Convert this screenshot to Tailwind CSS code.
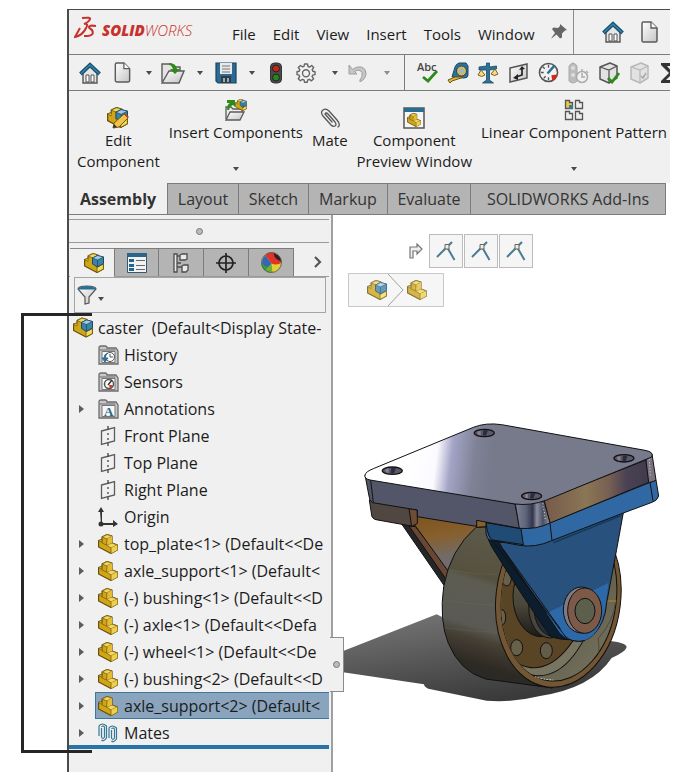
<!DOCTYPE html>
<html lang="en">
<head>
    <meta charset="UTF-8">
    <meta name="viewport" content="width=device-width, initial-scale=1.0">
    <title>SOLIDWORKS - caster</title>
    <script src="https://cdn.jsdelivr.net/npm/@tailwindcss/browser@4"></script>
</head>
<body class="bg-white text-[#1c1c1c] text-[15px] font-['Open_Sans','Noto_Sans',sans-serif]">

    <!-- Icon sprites -->
    <svg class="absolute h-0 w-0" aria-hidden="true">
        <symbol id="home" viewBox="0 0 22 22">
            <path d="M4 10v11h14V10l-7-6z" fill="#e6e6e6" stroke="#555" stroke-width="1.4"/>
            <path d="M7 20v-7h3v7zM12 20v-7h3v7z" fill="#fff" stroke="#555"/>
            <path d="M1.500 12 11 3l9.500 9" fill="none" stroke="#174f6e" stroke-width="4"/>
            <path d="M2 11.500 11 3l9 8.500" fill="none" stroke="#3585ab" stroke-width="1.600"/>
        </symbol>
        <symbol id="doc" viewBox="0 0 18 22">
            <path d="M2 2.500Q2 1 3.500 1H11l6 6v12.500q0 1.500-1.500 1.500h-12Q2 21 2 19.500z" fill="url(#paper)" stroke="#5b5b5b" stroke-width="1.500"/>
            <path d="M11 1v6h6" fill="#fff" stroke="#5b5b5b" stroke-width="1.300"/>
        </symbol>
        <symbol id="down" viewBox="0 0 6 4"><path d="M0 0h6L3 4z" fill="#4a4a4a"/></symbol>
        <symbol id="part" viewBox="0 0 20 20">
            <path d="m.6 6.500 3.400-1V3l5-2.400L14 2v7l5.400 2v5l-6.400 3.500L.6 13z" fill="#d0a516" stroke="#67500c" stroke-width="1.200" stroke-linejoin="round"/>
            <path d="m4 3 5 2 5-3-5-1.400zM8.500 11l4.500 3 6.400-3L14 9zM.6 6.500 4 8.500V5.500z" fill="#f0d662" stroke="#7d6110" stroke-width=".8" stroke-linejoin="round"/>
            <path d="m9 5 5-3v7l-5.500 2z" fill="#e3bd35"/>
            <path d="m13 14 6.400-3v5L13 19.500z" fill="#ecd04e"/>
            <path d="M13 14v5.500M9 5l-.5 6M4 5v4l4.500 2" fill="none" stroke="#7d6110" stroke-width=".8"/>
        </symbol>
        <symbol id="asm" viewBox="0 0 20 20">
            <path d="m.6 6.500 3.400-1V3l5-2.400L14 2v7l5.400 2v5l-6.400 3.500L.6 13z" fill="#d0a516" stroke="#67500c" stroke-width="1.200" stroke-linejoin="round"/>
            <path d="m4 3 5 2 5-3-5-1.400zM.6 6.500 4 8.500V5.500z" fill="#f0d662" stroke="#7d6110" stroke-width=".8" stroke-linejoin="round"/>
            <path d="M13 14v5.500l6.400-3.500v-5z" fill="#f6dc55" stroke="#67500c" stroke-width=".8"/>
            <path d="m8.500 5 5-2.500 6 1.500v6.500L13.500 14l-5-3z" fill="#3d83a8" stroke="#1f4a63" stroke-linejoin="round"/>
            <path d="m8.500 5 5 2 6-3-6-1.500z" fill="#9dcbe2" stroke="#1f4a63" stroke-width=".7"/>
            <path d="M13.500 7v7" stroke="#1f4a63" stroke-width=".8"/>
        </symbol>
        <symbol id="cube" viewBox="0 0 22 22">
            <path d="m2 5 10-4 7 3v12l-8 5-9-4z" fill="#e2e2e2" stroke="currentColor" stroke-width="1.500" stroke-linejoin="round"/>
            <path d="m2 5 9 3 8-4M11 8v13" fill="none" stroke="currentColor" stroke-width="1.300"/>
        </symbol>
        <symbol id="folder" viewBox="0 0 21 20">
            <path d="M1 19V3q0-2 2-2h4q2 0 2 2h9l2 3v13z" fill="#c8c8c8" stroke="#6c6c6c" stroke-width="1.300"/>
            <path d="M1.500 5h16" stroke="#6c6c6c"/>
            <path d="M4 6.500h13v11H4z" fill="#f7f7f7" stroke="#777"/>
        </symbol>
        <symbol id="plane" viewBox="0 0 20 20">
            <path d="M3.500 5 16.500 1.500V15L3.500 18.500z" fill="none" stroke="#5c5c5c" stroke-width="1.300"/>
            <path d="M10 0v4M10 7v2m0 3v2M10 16.500V20" stroke="#444" stroke-width="1.300"/>
        </symbol>
        <symbol id="mategap" viewBox="0 0 20 20">
            <path d="M1 16 11 6l7.500 13" fill="none" stroke="#497c96" stroke-width="2"/>
            <path d="m11 6 5-5" stroke="#497c96" stroke-width="2.200"/>
            <path d="M9 3.500h4v4.500H9z" fill="#eee" stroke="#6c6454"/>
        </symbol>
        <linearGradient id="paper" x2="1" y2="1"><stop stop-color="#fff"/><stop offset="1" stop-color="#c4c4c4"/></linearGradient>
    </svg>

    <div class="relative pt-[9px] pr-[9px] pb-3 pl-[67px]">
        <div class="border-l-2 border-t border-[#4b4b4b] bg-[#f0f0f0] overflow-hidden">

            <!-- Menu bar -->
            <header class="flex h-[45px] items-center border-b border-[#7c7c7c] whitespace-nowrap">
                <svg class="ml-[5px] -mt-2 h-6 w-6 shrink-0" viewBox="0 0 24 24" fill="none" stroke="#c8322c" stroke-width="2">
                    <path d="M8 2q9-1 8 1-1 3-6 5 5-1 2 4-3 7-11 9l5-9"/>
                    <path d="M22 10q-7-1-7 1 0 1 3 3 3 5-4 6h-4" stroke-width="2.200"/>
                </svg>
                <span class="ml-1 -mt-1 w-[130px] text-[15px] italic text-[#c8322c]"><b class="font-extrabold">SOLID</b><span class="font-light">WORKS</span></span>
                <nav class="flex gap-[17px] pt-1">
                    <button>File</button>
                    <button>Edit</button>
                    <button>View</button>
                    <button>Insert</button>
                    <button>Tools</button>
                    <button>Window</button>
                </nav>
                <button class="ml-4 shrink-0" aria-label="Pin menu">
                    <svg class="h-4 w-4" viewBox="0 0 16 16" fill="#666"><path d="m9 0 7 6-2 .5-3 3 0 4-2 1-3.500-4L1 14l-1 1 1-2 3-4L1 5l1.500-1.500L7 4l2-2z"/></svg>
                </button>
                <div class="ml-[6px] flex h-full grow items-center gap-4 border-l border-[#8c8c8c] pl-7">
                    <button aria-label="Home"><svg class="h-[22px] w-[22px]"><use href="#home"/></svg></button>
                    <button aria-label="New"><svg class="h-[22px] w-[18px]"><use href="#doc"/></svg></button>
                </div>
            </header>

            <!-- Quick access toolbar -->
            <div class="flex h-[36px] border-b border-[#7c7c7c] [&_button]:flex [&_button]:shrink-0 [&_button]:items-center [&_button]:justify-center">
                <div class="flex shrink-0 pl-[5px]">
                    <button class="w-8" aria-label="Home"><svg class="h-[22px] w-[22px]"><use href="#home"/></svg></button>
                    <button class="w-8" aria-label="New"><svg class="h-[21px] w-[18px]"><use href="#doc"/></svg></button>
                    <button class="w-[22px]" aria-label="New options"><svg class="h-1 w-[6px]"><use href="#down"/></svg></button>
                    <button class="w-[26px]" aria-label="Open">
                        <svg class="h-[22px] w-6" viewBox="0 0 24 22">
                            <path d="M1 20V2h9l2 3h7v4" fill="#e4e4e4" stroke="#5b5b5b" stroke-width="1.400"/>
                            <path d="M1 21 8 9h15l-5 12z" fill="url(#paper)" stroke="#5b5b5b" stroke-width="1.400"/>
                            <path d="M8 1q7 0 8 6h3l-5 5-5-5h3q-1-4-4-4z" fill="#2f8a1c"/>
                        </svg>
                    </button>
                    <button class="w-7" aria-label="Open options"><svg class="h-1 w-[6px]"><use href="#down"/></svg></button>
                    <button class="w-6" aria-label="Save">
                        <svg class="h-[22px] w-[22px]" viewBox="0 0 22 22">
                            <path d="M1 1h20v20H3l-2-2z" fill="#2d6a93" stroke="#174360" stroke-width="1.200"/>
                            <path d="M5 1h12v11H5z" fill="#e9e9e9"/><path d="M7 4h8M7 7h8M7 10h8" stroke="#777" stroke-width="1.200"/>
                            <path d="M6 14h10v7H6z" fill="#303c48"/><path d="M8 16h2v4H8zM12 16h2v4h-2z" fill="#9aa"/>
                        </svg>
                    </button>
                    <button class="w-7" aria-label="Save options"><svg class="h-1 w-[6px]"><use href="#down"/></svg></button>
                    <button class="w-5" aria-label="Rebuild">
                        <svg class="h-[22px] w-3" viewBox="0 0 12 22">
                            <rect x=".5" y="1" width="11" height="20" rx="4" fill="#4b4b4b" stroke="#333"/>
                            <circle cx="6" cy="6.500" r="3.500" fill="#c32418" stroke="#222"/><circle cx="6" cy="15.500" r="3.500" fill="#26861b" stroke="#222"/>
                        </svg>
                    </button>
                    <button class="w-10" aria-label="Options">
                        <svg class="h-5 w-5" viewBox="0 0 20 20" fill="none" stroke="#666" stroke-width="1.400" stroke-linejoin="round">
                            <path d="M8.500 1h3l.5 2.500 1.500.6L15.700 2.500l2 2-1.500 2.200.6 1.600L19 8.700v2.900l-2.300.5-.6 1.500 1.500 2.100-2.100 2.100-2.200-1.500-1.500.6-.5 2.300H8.500L8 16.900l-1.500-.6-2.100 1.500-2.100-2.100 1.400-2.200-.6-1.400L1 11.600V8.700l2.200-.5.6-1.500-1.500-2.200 2.100-2 2.200 1.400L8 3.300z"/>
                            <circle cx="10" cy="10.200" r="3.500"/>
                        </svg>
                    </button>
                    <button class="w-[18px]" aria-label="Options list"><svg class="h-1 w-[6px]"><use href="#down"/></svg></button>
                    <button class="w-[26px]" aria-label="Undo">
                        <svg class="h-[18px] w-[19px]" viewBox="0 0 19 18" fill="#c6c6c6" stroke="#9d9d9d" stroke-linejoin="round"><path d="M1 1v9h8L6.500 7.500q5-3 7.500 1 1 4-2 7.500v2q6-3 6-9-1-7-8-6-3 .5-5.500 2.500z"/></svg>
                    </button>
                    <button class="w-[34px] opacity-60" aria-label="Undo list"><svg class="h-1 w-[6px]"><use href="#down"/></svg></button>
                </div>
                <div class="flex min-w-0 overflow-hidden border-l border-[#7c7c7c] pl-2">
                    <button class="w-[30px]" aria-label="Spell check">
                        <svg class="h-[22px] w-[22px] overflow-visible" viewBox="0 0 22 22">
                            <text x="0" y="9" class="text-[11px] font-semibold" fill="#444">Abc</text>
                            <path d="m6 15 5 4 9-10" fill="none" stroke="#2f8a1c" stroke-width="2.800"/>
                        </svg>
                    </button>
                    <button class="w-[30px]" aria-label="Measure">
                        <svg class="h-[22px] w-[22px]" viewBox="0 0 22 22">
                            <path d="M5 15 8 5q1-3 4-4h7l2 3v9q0 3-4 3z" fill="#2d7298" stroke="#1b4964"/>
                            <circle cx="14.500" cy="9" r="5" fill="#dbb65a" stroke="#1b4964"/><circle cx="14.500" cy="9" r="2.300" fill="#8fbdd2"/>
                            <path d="M8 15h9l-12 4-2 2-2-3z" fill="#e4b93a" stroke="#6d5518"/>
                        </svg>
                    </button>
                    <button class="w-[30px]" aria-label="Mass properties">
                        <svg class="h-[22px] w-[22px]" viewBox="0 0 22 22">
                            <path d="M9.500 1h3v4l7-1v3l-7 1v10l4 3h-11l4-3V8L2 8V5l7.500-1z" fill="#2d7298" stroke="#1b4964" stroke-width=".8"/>
                            <path d="M1 13 4 8l4 5q-3 3-7 0M14 12l4-5 3 5q-3 3-7 0" fill="#f2d98c" stroke="#80601c"/>
                        </svg>
                    </button>
                    <button class="w-[30px]" aria-label="Section properties">
                        <svg class="h-5 w-[19px]" viewBox="0 0 19 20" fill="none" stroke="#555" stroke-width="1.500">
                            <path d="M1 5 18 1v14L1 19z" fill="url(#paper)"/>
                            <path d="M13 5v7l-6 2" stroke="#222" stroke-width="1.700"/><path d="m10 7 3-4 3 3zM9 11l-5 4 5 2z" fill="#222" stroke="none"/>
                        </svg>
                    </button>
                    <button class="w-[30px]" aria-label="Performance evaluation">
                        <svg class="h-[21px] w-[21px]" viewBox="0 0 22 22">
                            <circle cx="11" cy="11" r="9.500" fill="#f2f2f2" stroke="#555" stroke-width="1.600"/>
                            <path d="m14 14 6-1q-1 5-5 7z" fill="#d9261c"/>
                            <path d="m10 12 7-8" stroke="#25739c" stroke-width="2.600"/>
                            <path d="M11 3v3M3 11h3M5 5l2 2M6 17l2-2M11 19v-3" stroke="#555" stroke-width="1.400"/>
                        </svg>
                    </button>
                    <button class="w-[30px]" aria-label="Motion" disabled>
                        <svg class="h-[22px] w-[22px]" viewBox="0 0 22 22">
                            <path d="M2 19V4q4-6 8 0v15q-4 4-8 0" fill="#bcbcbc" stroke="#aaa"/><circle cx="6" cy="6" r="2" fill="#ddd"/><circle cx="6" cy="13" r="2" fill="#ddd"/>
                            <circle cx="15" cy="15" r="5.500" fill="#f1f1f1" stroke="#aaa" stroke-width="1.500"/><path d="M15 11v4h3M15 7v3m4-1 2 2" stroke="#aaa" stroke-width="1.500" fill="none"/>
                        </svg>
                    </button>
                    <button class="w-[31px] text-[#555]" aria-label="Check">
                        <svg class="h-[22px] w-[22px]" viewBox="0 0 22 22"><use href="#cube"/><path d="m10 16 4 4 7-9" fill="none" stroke="#2f8a1c" stroke-width="2.800"/></svg>
                    </button>
                    <button class="w-[31px] text-[#b9b9b9]" aria-label="Geometry check" disabled>
                        <svg class="h-[22px] w-[22px]" viewBox="0 0 22 22"><use href="#cube"/><path d="m12 14 2 2 3-5" fill="none" stroke="#aaa" stroke-width="1.600"/></svg>
                    </button>
                    <button class="ml-[6px]" aria-label="Equations">
                        <svg class="h-[22px] w-[18px]" viewBox="0 0 18 22" fill="#333"><path d="M0 1h17v5h-2l-1-2H6l6 7-7 7h9l1-3h2v6H0v-2l8-8-8-8z"/></svg>
                    </button>
                </div>
            </div>

            <!-- Ribbon -->
            <div class="flex h-[92px] gap-[9px] overflow-hidden pl-2 leading-[21px] whitespace-nowrap [&>button]:flex [&>button]:shrink-0 [&>button]:flex-col [&>button]:items-center">
                <button class="pt-4">
                    <svg class="mb-[1px] h-[22px] w-[22px]" viewBox="0 0 22 22"><use href="#asm" width="21" height="21"/><path d="m7 16 10-9 4 4-9 9-6 1z" fill="#f0c347" stroke="#70551a"/><path d="m17 7 1-1 4 4-1 1z" fill="#c5402d"/><path d="m6 21 1-4 3 3z" fill="#333"/></svg>
                    <span>Edit</span><span>Component</span>
                </button>
                <button class="pt-2">
                    <svg class="mb-[1px] h-[22px] w-[22px]" viewBox="0 0 22 22">
                        <path d="M1 20V8h5l2 2h9v3" fill="#eee" stroke="#5b5b5b" stroke-width="1.300"/><path d="m1 21 4-8h14l-4 8z" fill="url(#paper)" stroke="#5b5b5b" stroke-width="1.300"/>
                        <path d="M2 11q0-6 3-7H2V1h8v7L8 6q-3 1-4 5z" fill="#2f8a1c"/><use href="#asm" x="10" width="12" height="12"/>
                    </svg>
                    <span>Insert Components</span><svg class="mt-[24px] h-1 w-[6px]"><use href="#down"/></svg>
                </button>
                <button class="pt-4">
                    <svg class="mb-[1px] h-[22px] w-[22px]" viewBox="0 0 22 22" fill="none" stroke="#555" stroke-width="1.300" stroke-linecap="round"><path d="m9 7 7 8q2 3 0 4t-4-1L4 9Q1 5 4 3t6 1l8 9q4 5 1 7M6 7q1-2 3 0M6 7l7 8"/></svg>
                    <span>Mate</span>
                </button>
                <button class="pt-4">
                    <svg class="mb-[1px] h-[22px] w-[22px]" viewBox="0 0 22 22"><path d="M1 1h20v20H1z" fill="#f6f6f6" stroke="#555" stroke-width="1.500"/><path d="M1 1h20v4H1z" fill="#2b6d92"/><use href="#part" x="4" y="6" width="14" height="14"/></svg>
                    <span>Component</span><span>Preview Window</span>
                </button>
                <button class="pt-2">
                    <svg class="mb-[1px] h-[22px] w-5" viewBox="0 0 20 22" fill="#eee" stroke="#555" stroke-width="1.300">
                        <path d="M1.500 9.500v-8h4v2h3v6z" fill="#eac64b"/><path d="M5 6h4v4H5z" fill="#347ba0" stroke="none"/>
                        <path d="M11.500 9.500v-8h4v2h3v6zM1.500 20.500v-8h4v2h3v6zM11.500 20.500v-8h4v2h3v6z"/>
                    </svg>
                    <span>Linear Component Pattern</span><svg class="mt-[24px] h-1 w-[6px]"><use href="#down"/></svg>
                </button>
            </div>

            <!-- Command tabs -->
            <nav class="flex bg-white text-base text-[#333] [&>button]:h-8 [&>button]:border-y [&>button]:border-r [&>button]:border-[#7c7c7c] [&>button]:bg-[#b4b4b4] [&>button]:whitespace-nowrap">
                <button class="w-[99px] !border-t-0 !bg-[#f0f0f0] font-bold">Assembly</button>
                <button class="w-[71px]">Layout</button>
                <button class="w-[70px]">Sketch</button>
                <button class="w-[79px]">Markup</button>
                <button class="w-[83px]">Evaluate</button>
                <button class="w-[195px]">SOLIDWORKS Add-Ins</button>
            </nav>

            <div class="flex">
                <!-- Feature manager -->
                <aside class="relative w-[264px] shrink-0 border-r-2 border-[#a0a0a0] pb-[23px]">
                    <div class="mt-1 mr-[2px] flex h-6 items-center justify-center border-y border-[#9a9a9a]">
                        <span class="h-[7px] w-[7px] rounded-full border border-[#777] bg-[#bbb]"></span>
                    </div>
                    <div class="mt-[5px] mr-[2px] flex h-[29px] border-b border-[#9a9a9a] pl-[1px] [&>button]:flex [&>button]:shrink-0 [&>button]:items-center [&>button]:justify-center">
                        <button class="-mb-px w-11 border-t border-[#8a8a8a] bg-[#f0f0f0] pl-1" aria-label="Feature tree"><svg class="h-5 w-5"><use href="#asm"/></svg></button>
                        <button class="w-[45px] border border-b-0 border-[#7c7c7c] bg-[#b4b4b4]" aria-label="Properties">
                            <svg class="h-5 w-5" viewBox="0 0 20 20"><path d="M.5.500h19v19H.5z" fill="#f2f2f2" stroke="#34596e"/><path d="M0 0h20v4H0z" fill="#2b6488"/><path d="M2 6h5v3H2zM2 11h5v3H2zM2 15h5v3H2z" fill="#22668b"/><path d="M9 7.500h9M9 12.500h9M9 16.500h9" stroke="#666"/></svg>
                        </button>
                        <button class="w-[45px] border-t border-r border-[#7c7c7c] bg-[#b4b4b4]" aria-label="Configurations">
                            <svg class="h-5 w-4" viewBox="0 0 16 20" fill="#e9e9e9" stroke="#4c4c4c" stroke-width="1.300"><path d="M1 1h3v18H1zM4 3h5M4 14h5M4 10h4"/><path d="m7 2 2-1h5v5l-2 1H7zM9 13l2-1h4v5l-2 2H9z"/></svg>
                        </button>
                        <button class="w-[45px] border-t border-r border-[#7c7c7c] bg-[#b4b4b4]" aria-label="Dimensions">
                            <svg class="h-5 w-5" viewBox="0 0 20 20" fill="none" stroke="#222" stroke-width="1.700"><circle cx="10" cy="10" r="7"/><path d="M10 0v20M0 10h20"/></svg>
                        </button>
                        <button class="w-[45px] border-t border-r border-[#7c7c7c] bg-[#b4b4b4]" aria-label="Appearances">
                            <svg class="h-[21px] w-[21px]" viewBox="0 0 20 20"><circle cx="10" cy="10" r="9.500" fill="#e6cf35"/><path d="M10 11 4 18q-4-3-3.500-8z" fill="#3c9b38"/><path d="M1 10q0-4 3-7l6 8-3 3q-4 0-6-4" fill="#2f68bb"/><path d="M4 3Q8-1 13 1l7 9q-5 3-10 1z" fill="#e0342a"/><path d="M12 1q7 2 7.500 8-7-2-7.500-8" fill="#33201f"/><path d="m4 18 6-7 1 8.500q-4 1-7-1.500" fill="#6fae35"/><circle cx="10" cy="10" r="9.500" fill="none" stroke="#555" stroke-width=".8"/></svg>
                        </button>
                        <button class="w-[35px] pl-3" aria-label="More tabs"><svg class="h-3 w-2" viewBox="0 0 8 12" fill="none" stroke="#555" stroke-width="2.200"><path d="m1 1 5 5-5 5"/></svg></button>
                    </div>
                    <label class="mr-[5px] ml-[5px] flex h-9 items-center border border-[#a5a5a5] pl-[2px]">
                        <svg class="h-5 w-5" viewBox="0 0 20 20"><path d="M1 4q0-3 9-3t9 3l-7 8v6l-4 1v-7z" fill="url(#paper)" stroke="#555" stroke-width="1.200"/><path d="M1 3q9-4 18 0v1.500H1z" fill="#276f94"/></svg>
                        <svg class="mt-2 ml-[1px] h-1 w-[6px]"><use href="#down"/></svg>
                        <input type="text" aria-label="Filter" class="ml-1 min-w-0 grow bg-transparent outline-none">
                    </label>

                    <ul id="tree" class="mt-px mr-[2px] overflow-hidden text-base"></ul>
                    <div class="-mt-px mr-[2px] h-1 bg-[#2874a6]"></div>

                    <!-- Panel collapse handle -->
                    <button class="absolute top-[422px] -right-[13px] flex h-[55px] w-[14px] items-center border border-l-0 border-[#8c8c8c] bg-[#f0f0f0] pl-[3px]" aria-label="Collapse panel">
                        <span class="h-[7px] w-[7px] rounded-full border border-[#777] bg-[#bbb]"></span>
                    </button>
                </aside>

                <!-- Graphics area -->
                <main class="min-w-0 grow bg-white">
                    <div class="flex items-center gap-[1px] pt-[19px] pl-[76px]">
                        <svg class="mr-[5px] h-4 w-[14px]" viewBox="0 0 14 16" fill="#eee" stroke="#777" stroke-width="1.200"><path d="M1 15V4h7V1l5 5-5 5V8H4v7z"/></svg>
                        <button class="flex h-[34px] w-[34px] items-center justify-center border border-[#bcbcbc] bg-[#f5f5f5]" aria-label="Mate 1"><svg class="h-5 w-5"><use href="#mategap"/></svg></button>
                        <button class="flex h-[34px] w-[34px] items-center justify-center border border-[#bcbcbc] bg-[#f5f5f5]" aria-label="Mate 2"><svg class="h-5 w-5"><use href="#mategap"/></svg></button>
                        <button class="flex h-[34px] w-[34px] items-center justify-center border border-[#bcbcbc] bg-[#f5f5f5]" aria-label="Mate 3"><svg class="h-5 w-5"><use href="#mategap"/></svg></button>
                    </div>
                    <div class="mt-[5px] ml-[15px] flex h-[34px] w-24 items-center border border-[#bcbcbc] bg-[#f5f5f5] pl-[18px] opacity-80">
                        <button aria-label="caster"><svg class="h-5 w-5"><use href="#asm"/></svg></button>
                        <svg class="h-8 w-[17px]" viewBox="0 0 17 32" fill="none" stroke="#888"><path d="m1 0 15 16L1 32"/></svg>
                        <button class="ml-[3px]" aria-label="part"><svg class="h-5 w-5"><use href="#part"/></svg></button>
                    </div>

                    <svg class="mt-[103px] h-[300px] w-full" viewBox="-21 30 1011 900" preserveAspectRatio="xMinYMin meet" stroke="#111" stroke-width="3" stroke-linejoin="round" role="img" aria-label="Caster model">
                        <defs>
                            <linearGradient id="shade" x1="0" y1="0" x2=".5" y2="1"><stop stop-color="#7a7a7a"/><stop offset="1" stop-color="#3a3a3a"/></linearGradient>
                            <linearGradient id="plateTop" gradientUnits="userSpaceOnUse" x1="200" y1="195" x2="450" y2="225"><stop stop-color="#fff"/><stop offset=".34" stop-color="#fbfaff"/><stop offset=".52" stop-color="#a3a4c6"/><stop offset=".8" stop-color="#7f8195"/><stop offset="1" stop-color="#777a8b"/></linearGradient>
                            <linearGradient id="plateRight" x1="0" x2="1"><stop stop-color="#765a4b"/><stop offset=".4" stop-color="#8a7655"/><stop offset=".62" stop-color="#775f52"/><stop offset=".78" stop-color="#4a4255"/><stop offset="1" stop-color="#403c4b"/></linearGradient>
                            <linearGradient id="corner" x1="0" x2="1"><stop stop-color="#7f8296"/><stop offset=".3" stop-color="#60647a"/><stop offset=".5" stop-color="#32364c"/><stop offset=".62" stop-color="#8a8da1"/><stop offset=".8" stop-color="#4c4f63"/><stop offset="1" stop-color="#96949c"/></linearGradient>
                            <linearGradient id="tread" x1=".2" y1="0" x2="0" y2="1"><stop stop-color="#5d5a4b"/><stop offset=".28" stop-color="#56513f"/><stop offset=".32" stop-color="#5d5c52"/><stop offset=".58" stop-color="#5a5a54"/><stop offset=".66" stop-color="#453f34"/><stop offset=".8" stop-color="#2d2a24"/><stop offset="1" stop-color="#242725"/></linearGradient>
                            <linearGradient id="bronze" x1=".3" y1="0" x2=".5" y2="1"><stop stop-color="#7c5219"/><stop offset=".45" stop-color="#86602f"/><stop offset=".8" stop-color="#706c6a"/></linearGradient>
                            <linearGradient id="rim" x1="0" x2="1" y2="1"><stop stop-color="#46402f"/><stop offset=".6" stop-color="#625f4b"/><stop offset="1" stop-color="#777462"/></linearGradient>
                            <linearGradient id="hub" x2="0" y2="1"><stop stop-color="#65614f"/><stop offset=".6" stop-color="#4a4639"/><stop offset="1" stop-color="#1c1b18"/></linearGradient>
                            <clipPath id="rimClip"><ellipse cx="657" cy="592" rx="172" ry="252" transform="rotate(7 657 592)"/></clipPath>
                        </defs>

                        <!-- ground shadow -->
                        <path d="M-21 765 290 643l40 20 480 60q50 5 50 19-4 14-45 32-60 90-215 114-80 20-160 14l-175-36q-12-4-13-13L-21 812z" fill="url(#shade)" stroke="none"/>

                        <!-- rear support -->
                        <path d="m185 372 40 5 105 135-18 44z" fill="#252525"/>
                        <path d="m207 378 20 2 100 130-7 30z" fill="#6a4635"/>
                        <path d="m215 325 225 45-20 60-98 80L222 372z" fill="url(#bronze)"/>
                        <path d="m88 300 135 28-4 51-111-20q-14-3-14-20z" fill="#504742"/>
                        <path d="m207 325 25 5v40l-17 10z" fill="#6f4d35"/>

                        <!-- wheel -->
                        <path d="M408 382Q330 450 311 560q-14 100 14 170 35 85 112 107l200 27V370z" fill="url(#tread)"/>
                        <path d="M330 511q80 14 160 12M310 600q80 15 158 15M314 683q80 12 158 14" fill="none" stroke="#76715e" stroke-width="2" opacity=".4"/>
                        <ellipse cx="655" cy="595" rx="187" ry="268" transform="rotate(7 655 595)" fill="#735633"/>
                        <ellipse cx="657" cy="592" rx="172" ry="252" transform="rotate(7 657 592)" fill="url(#rim)"/>
                        <g clip-path="url(#rimClip)">
                            <ellipse cx="615" cy="580" rx="152" ry="248" transform="rotate(7 615 580)" fill="#77745f"/>
                            <ellipse cx="605" cy="575" rx="142" ry="230" transform="rotate(10 605 575)" fill="#5a4426"/>
                            <ellipse cx="603" cy="590" rx="84" ry="120" fill="url(#hub)"/>
                            <ellipse cx="630" cy="620" rx="64" ry="94" fill="#49453c"/>
                            <ellipse cx="638" cy="622" rx="56" ry="86" fill="#242c38"/>
                            <ellipse cx="530" cy="743" rx="18" ry="24" fill="#67614c"/>
                            <ellipse cx="619" cy="752" rx="18" ry="24" fill="#625c49"/>
                            <ellipse cx="486" cy="652" rx="11" ry="23" fill="#67614c"/>
                            <ellipse cx="500" cy="535" rx="14" ry="23" fill="#67614c"/>
                            <path d="M770 790q10-30 5-75 45-50 52-110" fill="none" stroke="#4e4b3d"/>
                            <path d="M800 603h30" stroke="#9a7d37" stroke-width="4"/>
                        </g>
                        <path d="M585 830q20 8 55 10" fill="none" stroke="#ddd" stroke-width="3" stroke-dasharray="5 4"/>

                        <!-- front support -->
                        <path d="M445 418h45l210 300q-30 4-68-8Q560 610 455 440z" fill="#0c1d2d"/>
                        <path d="m478 428 372-90-20 110-30 160q-4 60-40 97-25 24-62 16-30-8-48-35L490 450z" fill="#28517e"/>
                        <path d="m620 640 186-92-9 65q-6 58-37 92-25 24-62 16-20-4-38-22z" fill="#2d69a8" stroke="none"/>
                        <path d="M465 432 675 708q20 22 60 14M490 448l172 240" fill="none"/>
                        <path d="m438 368 107 17 85-17 318-128 8 48q-4 14-20 19l-86 32-215 83q-50 22-95 14l-90-16q-16-4-12-52" fill="#3068a3"/>
                        <path d="m438 368 105 18 7 48-92-14q-14-4-20-52" fill="#1f4b75"/>
                        <path d="m630 370 6 52M930 247l9 55" fill="none"/>
                        <path d="m640 428 207-83" fill="none" stroke="#173a5b" stroke-width="5"/>
                        <path d="M408 360h30v20l-28 2z" fill="#8a5f29"/>

                        <!-- top plate -->
                        <path d="m75 225 450 87 15 73-130-24v18L232 350v-20l-134-22q-10-5-11-20z" fill="#535668"/>
                        <path d="m612 300 306-120 10 66-298 123z" fill="url(#plateRight)"/>
                        <path d="m526 311 86-8 18 66q-40 20-92 16z" fill="url(#corner)"/>
                        <path d="m918 180 18-18 12 78q-6 5-22 8z" fill="#7b7480"/>
                        <path d="M609 310v12l4 12v12l4 16M928 178l3 50" fill="none" stroke="#ddd" stroke-dasharray="3 6"/>
                        <path d="m92 240 8 68" fill="none"/>
                        <path d="M75 225q2-10 25-19l300-124q38-15 85-8l430 77q28 5 20 20L620 300q-48 18-95 12L90 240q-18-4-15-15z" fill="url(#plateTop)"/>
                        <g fill="#5b586c" stroke-width="4">
                            <ellipse cx="433" cy="99" rx="30" ry="11"/>
                            <ellipse cx="157" cy="212" rx="30" ry="11"/>
                            <ellipse cx="575" cy="288" rx="30" ry="11"/>
                            <ellipse cx="852" cy="175" rx="30" ry="11"/>
                        </g>
                        <g fill="#8a7f86" stroke="none">
                            <path d="m412 95 10-3v14l-8-2zM136 208l10-3v14l-8-2zM554 284l10-3v14l-8-2zM831 171l10-3v14l-8-2z"/>
                        </g>
                        <g fill="#2c2c40" stroke="none">
                            <path d="m430 91 14-1-6 17-10-1zM154 204l14-1-6 17-10-1zM572 280l14-1-6 17-10-1zM849 167l14-1-6 17-10-1z"/>
                        </g>

                        <!-- axle -->
                        <ellipse cx="724" cy="630" rx="54" ry="69" fill="#817a82"/>
                        <ellipse cx="734" cy="632" rx="51" ry="68" fill="#7d5948"/>
                        <ellipse cx="735" cy="633" rx="30" ry="38" fill="#5b5f4c"/>
                    </svg>
                </main>
            </div>
        </div>

        <!-- Callout bracket -->
        <div class="pointer-events-none absolute top-[313px] left-[21px] h-[440px] w-[71px] border-y-3 border-l-3 border-[#262626]"></div>
    </div>

    <script>
        const folder = (mark) => `<svg class="h-5 w-[21px]" viewBox="0 0 21 20"><use href="#folder"/>${mark}</svg>`;
        const plane = '<svg class="h-5 w-5"><use href="#plane"/></svg>';
        const part = '<svg class="h-5 w-5"><use href="#part"/></svg>';

        // [icon, label, expandable, selected]
        const items = [
            [folder('<circle cx="12" cy="12" r="4.500" fill="#fff" stroke="#555"/><path d="M12 9v3h3" fill="none" stroke="#555"/><path d="M4 13h6l-3 4zM6 13q0-4 4-5" fill="#2b7396" stroke="#2b7396"/>'), 'History', false],
            [folder('<circle cx="11" cy="12" r="4.500" fill="#fff" stroke="#555" stroke-width="1.500"/><path d="m10 13 4-5" stroke="#333" stroke-width="1.500"/><path d="m11 13 4 0-3 4z" fill="#d5371f"/>'), 'Sensors', false],
            [folder('<text x="6" y="17" class="font-[Liberation_Serif] text-[13px] font-bold" fill="#1f6686">A</text>'), 'Annotations', true],
            [plane, 'Front Plane', false],
            [plane, 'Top Plane', false],
            [plane, 'Right Plane', false],
            ['<svg class="h-5 w-5" viewBox="0 0 20 20" fill="#333"><path d="M2 4h2v12h11v2H3zM0 5l3-5 3 5zM15 13l5 4-5 3z"/><circle cx="3" cy="17" r="2.500"/></svg>', 'Origin', false],
            [part, 'top_plate&lt;1&gt; (Default&lt;&lt;De', true],
            [part, 'axle_support&lt;1&gt; (Default&lt;', true],
            [part, '(-) bushing&lt;1&gt; (Default&lt;&lt;D', true],
            [part, '(-) axle&lt;1&gt; (Default&lt;&lt;Defa', true],
            [part, '(-) wheel&lt;1&gt; (Default&lt;&lt;De', true],
            [part, '(-) bushing&lt;2&gt; (Default&lt;&lt;D', true],
            [part, 'axle_support&lt;2&gt; (Default&lt;', true, true],
            ['<svg class="h-5 w-5" viewBox="0 0 20 20" fill="none" stroke="#347796" stroke-width="1.200"><path d="M3.500 5v9q1.500 3 3 0V4Q5 2 3.500 4M1 13V3q3-4 7.500 0v12q-3 4-5 2M13.500 7v8q1.500 3 3 0V6q-1.500-2-3 0M11 15V5q3-4 7.500 0v11q-3 4-5 2"/></svg>', 'Mates', true]
        ];

        let html = `<li class="flex h-[27px] items-center gap-[5px] pl-1 whitespace-pre"><svg class="h-[21px] w-5 shrink-0"><use href="#asm"/></svg><span>caster  (Default&lt;Display State-</span></li>`;
        items.forEach(([icon, label, expandable, selected]) => {
            const arrow = expandable ? '<button aria-label="Expand"><svg class="h-2 w-[5px]" viewBox="0 0 5 8" fill="#5c5c5c"><path d="M0 0l5 4-5 4z"/></svg></button>' : '';
            const row = selected
                ? 'flex h-[27px] grow items-center gap-[5px] border border-r-0 border-[#3c789c] bg-[#89a4bc] pl-[2px]'
                : 'flex h-[27px] grow items-center gap-[5px] pl-[3px]';
            html += `<li class="flex items-center whitespace-nowrap"><span class="flex w-[26px] shrink-0 pl-[10px]">${arrow}</span><div class="${row}"><span class="w-[21px] shrink-0">${icon}</span><span>${label}</span></div></li>`;
        });
        document.getElementById('tree').innerHTML = html;
    </script>
</body>
</html>
